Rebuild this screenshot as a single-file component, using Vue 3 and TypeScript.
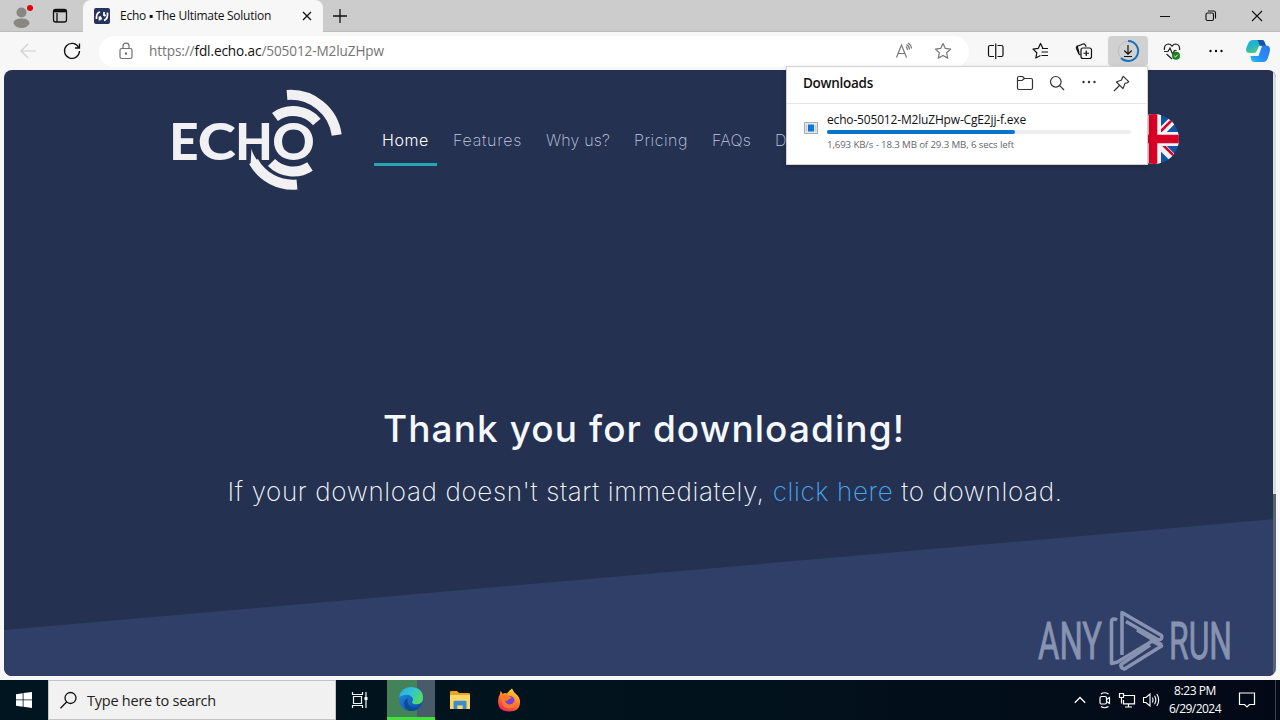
<script setup lang="ts">
import type { Directive } from 'vue'

interface NavItem {
  label: string
  width: number
  active?: boolean
}

const navItems: NavItem[] = [
  { label: 'Home', width: 47, active: true },
  { label: 'Features', width: 69 },
  { label: 'Why us?', width: 64 },
  { label: 'Pricing', width: 54 },
  { label: 'FAQs', width: 39 },
  { label: 'D', width: 12 },
]

const progress = 62

// Tracks a single-line label so that it spans the given width in pixels.
const vFit: Directive<HTMLElement, number> = {
  mounted(el, { value }) {
    const count = (el.textContent ?? '').trim().length
    const range = document.createRange()
    range.selectNodeContents(el)
    const natural = range.getBoundingClientRect().width
    el.style.letterSpacing = `${((value - natural) / Math.max(count, 1)).toFixed(3)}px`
  },
}
</script>

<template>
  <div class="screen">
    <header class="titlebar">
      <div class="profile">
        <svg width="26" height="28" viewBox="0 0 26 28">
          <circle cx="12.500" cy="10.500" r="5" fill="#8a8684" />
          <path d="M4.500 21.500q0-5 8-5t8 5q-2.500 4.500-8 4.500t-8-4.500z" fill="#8a8684" />
          <circle cx="21" cy="6" r="3" fill="#e3000f" />
        </svg>
      </div>
      <div class="workspaces">
        <svg width="16" height="16" viewBox="0 0 16 16" fill="none" stroke="#111" stroke-width="1.300">
          <rect x="1.500" y="1.500" width="13" height="12.500" rx="2.200" />
          <path d="M1.500 3.700h13M5 5v9" />
          <path d="M2 3h12" stroke-width="2.200" />
        </svg>
      </div>
      <div class="tab">
        <svg width="16" height="16" viewBox="0 0 16 16">
          <rect width="16" height="16" rx="2" fill="#29345c" />
          <path d="M2.500 11V8.500Q3 4.500 6 4M5.500 12.500V8.500M10 4v4M13.500 4.500v3Q13 11.500 10 12.500M6 8.500l1.500 3M10 8l1.700-1" stroke="#fff" stroke-width="1.700" fill="none" />
        </svg>
        <span class="tab-title"><span v-fit="151">Echo ▪ The Ultimate Solution</span></span>
        <svg width="10" height="10" viewBox="0 0 10 10" stroke="#111" stroke-width="1.300"><path d="M1 1l8 8M9 1l-8 8" /></svg>
      </div>
      <svg class="new-tab" width="14" height="14" viewBox="0 0 14 14" stroke="#111" stroke-width="1.300"><path d="M7 0v14M0 7h14" /></svg>
      <div class="window-controls">
        <svg width="46" height="32" viewBox="0 0 46 32" stroke="#111"><path d="M18 16.500h10" /></svg>
        <svg width="46" height="32" viewBox="0 0 46 32" fill="none" stroke="#111" stroke-width="1.100">
          <rect x="18" y="13" width="7.500" height="7.500" rx="1.500" /><path d="M20 11h5.500q2 0 2 2v5.500" />
        </svg>
        <svg width="46" height="32" viewBox="0 0 46 32" stroke="#111" stroke-width="1.100"><path d="M18 11l10 10M28 11l-10 10" /></svg>
      </div>
    </header>

    <div class="toolbar">
      <svg class="tool back" viewBox="0 0 44 30" fill="none" stroke="#cfcfcf" stroke-width="1.200"><path d="M30 15H15M22 8l-7 7 7 7" /></svg>
      <svg class="tool" viewBox="0 0 44 30" fill="none" stroke="#111" stroke-width="1.300"><path d="M28.700 11.500a7.500 7.500 0 1 0 .8 3.500M29.500 7.500v4.500h-4.500" /></svg>
      <div class="omnibox">
        <svg width="14" height="18" viewBox="0 0 14 18" fill="none" stroke="#707070" stroke-width="1.200">
          <rect x="1" y="6.500" width="12" height="10" rx="1.700" /><path d="M4 6.500V4q0-2.800 3-2.800T10 4v2.500" /><circle cx="7" cy="11.500" r=".6" fill="#707070" />
        </svg>
        <span class="url"><span v-fit="235">https://<b>fdl.echo.ac</b>/505012-M2luZHpw</span></span>
        <svg width="18" height="18" viewBox="0 0 18 18" fill="none" stroke="#777" stroke-width="1.200">
          <path d="M1.500 15.500L6.500 3l5 12.500M3.200 11.500h6.600M11 4.500q1.500 1.200 1.500 3.500M11.500 2.500q3 1.700 3 5M13 1q3.300 2 3.500 5.500" />
        </svg>
        <svg class="star" width="18" height="18" viewBox="0 0 18 18" fill="none" stroke="#777" stroke-width="1.200">
          <path d="M9 1.500l2.300 4.900 5.300.7-3.900 3.700 1 5.300L9 13.500l-4.700 2.600 1-5.300L1.400 7.100l5.300-.7z" stroke-linejoin="round" />
        </svg>
      </div>
      <div class="actions">
        <svg class="tool" viewBox="0 0 44 30" fill="none" stroke="#111" stroke-width="1.200"><path d="M20 9.500h-4q-1.500 0-1.500 1.500v8q0 1.500 1.500 1.500h4M23.500 9.500h4q1.500 0 1.500 1.500v8q0 1.500-1.500 1.500h-4M21.750 7.500v15.500" /></svg>
        <svg class="tool" viewBox="0 0 44 30" fill="none" stroke="#111" stroke-width="1.200"><path d="M28 12.500h-3l-2.500-5-2.300 4.900-5.200.7 3.800 3.700-1 5.200 4.700-2.500M24 12.500h6M23.500 16h6.500M23.500 19.500h6.500" stroke-linejoin="round" /></svg>
        <svg class="tool" viewBox="0 0 44 30" fill="none" stroke="#111" stroke-width="1.200">
          <path d="M18.500 19l-1.500-1-2.500-5.500q-.6-1.600 1-2.200l5.500-2.300q1.500-.5 2.300 1l.9 1.600M17 17l-2-7.500" /><rect x="19" y="12" width="10.500" height="10.500" rx="2" /><path d="M24.250 14.500v5.500M21.500 17.250h5.500" />
        </svg>
        <div class="download-button">
          <svg class="tool" viewBox="0 0 40 30" fill="none">
            <circle cx="20" cy="15" r="9.700" stroke="#bdbdbd" stroke-width="1" />
            <path d="M20 5a10 10 0 1 1-7 17" stroke="#1873bd" stroke-width="1.900" /><path d="M20 9v9M16.300 14.500l3.700 3.700 3.700-3.700M16 20.500h8" stroke="#111" stroke-width="1.200" />
          </svg>
        </div>
        <svg class="tool" viewBox="0 0 44 30" fill="none" stroke="#222" stroke-width="1.200">
          <path d="M14.500 14q-.7-5.500 3.700-6 2.300 0 3.800 2.200Q23.500 8 25.800 8q4.400.5 3.700 6M14 15.500h4l2-3.500 2.500 6 2-3.500h2M16.500 18l5.500 5" /><circle cx="26" cy="19.800" r="4" fill="#16811e" stroke="none" /><path d="M24.200 19.800l1.300 1.300 2.300-2.500" stroke="#fff" stroke-width=".9" />
        </svg>
        <svg class="tool" viewBox="0 0 44 30" fill="#111"><circle cx="16.500" cy="15" r="1.200" /><circle cx="22" cy="15" r="1.200" /><circle cx="27.500" cy="15" r="1.200" /></svg>
        <svg class="copilot" width="26" height="24" viewBox="0 0 26 24">
          <defs>
            <linearGradient id="cpA" x1="0" y1="0" x2=".6" y2="1"><stop stop-color="#1bb0e0" /><stop offset=".5" stop-color="#22b7c3" /><stop offset="1" stop-color="#62cf6b" /></linearGradient>
            <linearGradient id="cpB" x1="1" y1="0" x2="0" y2="1"><stop stop-color="#2879ee" /><stop offset=".6" stop-color="#2b8df5" /><stop offset="1" stop-color="#1dc4ee" /></linearGradient>
          </defs>
          <path d="M8 1h9q2 0 2.700 2.200L21 7h-4q-2 0-2.800 2.400L12 12q-.7 2-3 2H5q-4 0-4-3.500Q1 9 3 5q1.300-4 5-4z" fill="url(#cpA)" />
          <path d="M12 1h5q2 0 2.700 2.200L21 7h-4q-2.500 0-3.300-3Q13.200 1.500 12 1z" fill="#1853a9" />
          <path d="M17.500 6.500H21q4 0 4 4 0 2.500-2 8-1.400 4.500-5 4.500H9q-2 0-2.700-2L5.500 17H9q2.300 0 3-2.200l2.300-6Q15 6.500 17.500 6.500z" fill="url(#cpB)" />
          <path d="M14 7h3l-3.500 10h-4z" fill="#eefcff" />
        </svg>
      </div>
    </div>

    <main class="viewport">
      <div class="slope"></div>
      <nav class="site-nav">
        <svg class="logo" width="180" height="110" viewBox="165 85 180 110">
          <g fill="none" stroke="#f1f1f3" stroke-width="10">
            <path d="M287 95a46.500 46.500 0 0 1 49.700 40" />
            <path d="M275 117a31 31 0 0 1 41.800 5" />
            <path d="M271.500 162.500a30.500 30.500 0 0 0 38.500 4" />
            <path d="M253.500 161.500a45 45 0 0 0 43.500 23" />
          </g>
          <path d="M251.500 148.500q1 6 8 15l-9 1z" fill="#f1f1f3" />
          <g class="logo-text">
            <text x="169.200" y="160.300">E</text>
            <text x="197.700" y="160.300" textLength="38" lengthAdjust="spacingAndGlyphs">C</text>
            <text x="235.200" y="160.300" textLength="37.500" lengthAdjust="spacingAndGlyphs">H</text>
            <text x="272.300" y="160.300" textLength="42.500" lengthAdjust="spacingAndGlyphs">O</text>
          </g>
        </svg>
        <ul class="links">
          <li v-for="item in navItems" :key="item.label" :class="{ active: item.active }"><span v-fit="item.width">{{ item.label }}</span></li>
        </ul>
        <svg class="flag" width="50" height="50" viewBox="0 0 50 50">
          <defs><clipPath id="round"><circle cx="25" cy="25" r="25" /></clipPath></defs>
          <g clip-path="url(#round)">
            <rect width="50" height="50" fill="#0f55a5" />
            <path d="M0 0l50 50M50 0L0 50" stroke="#f2f2f5" stroke-width="8" />
            <path d="M24 25L49 0M28 25l23 23M25 25L0 0M23 25L0 48" stroke="#d80027" stroke-width="2.500" />
            <path d="M25 0v50M0 25h50" stroke="#f2f2f5" stroke-width="14" />
            <path d="M24 0v50M0 25h50" stroke="#d80027" stroke-width="8.500" />
          </g>
        </svg>
      </nav>
      <section class="hero">
        <h1><span v-fit="522">Thank you for downloading!</span></h1>
        <p><span v-fit="835">If your download doesn't start immediately, <a>click here</a> to download.</span></p>
      </section>
      <div class="scrollbar"><div class="thumb"></div></div>
      <svg class="watermark" width="204" height="70" viewBox="1035 605 204 70">
        <g class="mark-text">
          <text x="1038" y="659.300" textLength="64" lengthAdjust="spacingAndGlyphs">ANY</text>
          <text x="1169" y="659.300" textLength="63" lengthAdjust="spacingAndGlyphs">RUN</text>
        </g>
        <g fill="none" stroke="#8793b1" stroke-width="3.600" stroke-linejoin="round">
          <path d="M1117 620q-5.500-3-5.500 2.500v41l6-1.500 34-20.500" />
          <path d="M1122 655v-42.500l39.500 23q1.500 4-3 4.500L1126 621.500" />
          <path d="M1150 640l11.500 6-37 23q-4-.5-3.500-4.500l29-19.500M1137 630l25 15" />
        </g>
      </svg>
    </main>

    <footer class="taskbar">
      <div class="start"><svg width="16" height="16" viewBox="0 0 16 16" fill="#fff"><path d="M0 2.200l6.700-1v6.300H0zM7.500 1.100L16 0v7.500H7.500zM0 8.300h6.700v6.500l-6.700-1zM7.500 8.300H16V16l-8.500-1.200z" /></svg></div>
      <div class="search">
        <svg width="18" height="18" viewBox="0 0 18 18" fill="none" stroke="#111" stroke-width="1.300"><circle cx="10.500" cy="7" r="5.500" /><path d="M6.800 10.800L.5 17.200" /></svg>
        <span v-fit="129">Type here to search</span>
      </div>
      <div class="task">
        <svg width="18" height="18" viewBox="0 0 18 18" fill="none" stroke="#eef3f5" stroke-width="1.200"><path d="M1.500 1v2.500h10V1M1.500 17v-2.500h10V17M2.500 5.500h8v7h-8zM15 1v16" /><path d="M13.500 6h3v3h-3z" fill="#fff" stroke="none" /></svg>
      </div>
      <div class="task edge">
        <svg width="26" height="26" viewBox="0 0 26 26">
          <defs>
            <linearGradient id="edTop" x1="0" y1="0" x2="1" y2=".5"><stop stop-color="#2ba9e8" /><stop offset=".55" stop-color="#2fc5d0" /><stop offset="1" stop-color="#56d86a" /></linearGradient>
            <linearGradient id="edBody" x1="0" y1="0" x2=".7" y2="1"><stop stop-color="#2294e2" /><stop offset="1" stop-color="#0d51ad" /></linearGradient>
          </defs>
          <circle cx="13" cy="13" r="12" fill="url(#edBody)" />
          <path d="M1.200 11Q3 1 13.500 1 25 2 25 12q0 6-6.200 6.200-5 0-4.800-2.300 2-2.300 0-5Q10 6.500 1.200 11z" fill="url(#edTop)" />
          <path d="M10 12.500q-2 6 3.500 8.500 4.500 2 9-1.500-4.500 7-12 5-6-4-4-9.500 1-2.500 3.500-2.500z" fill="#0f4a97" />
        </svg>
      </div>
      <div class="task">
        <svg width="22" height="20" viewBox="0 0 22 20"><path d="M1 2q0-1 1-1h6l2 2h10q1 0 1 1v14H1z" fill="#e7a41d" /><path d="M1 5h20v14H1z" fill="#ffd766" /><path d="M4.500 19v-7q0-1.200 1.200-1.200h10.600q1.200 0 1.200 1.200v7h-3.800v-3.500H8.300V19z" fill="#3b8ecb" /></svg>
      </div>
      <div class="task">
        <svg width="24" height="24" viewBox="0 0 24 24">
          <defs><linearGradient id="fx" x1=".8" y1="0" x2=".3" y2="1"><stop stop-color="#ffe242" /><stop offset=".45" stop-color="#ff8a22" /><stop offset="1" stop-color="#f3225c" /></linearGradient></defs>
          <path d="M15 .5q1.500 3.500 4 5.500 4 3 4 8 0 9.500-11 9.500T1 13q0-4 2-7l.5-3Q5 4 5.500 6 8 4.500 10 5.500 12 2.500 15 .5z" fill="url(#fx)" />
          <circle cx="12.300" cy="13" r="5.300" fill="#7a3fd4" /><path d="M5.500 7.500q3-2 6 .5 2.500.5 3 2-3 .5-3.500 2.500-1 .5-3 0 1 4 5 4 3.500-.5 4.300-4 2 7-4.300 8-7 0-8.300-6.500z" fill="#ff7a28" />
        </svg>
      </div>
      <div class="tray">
        <svg width="12" height="18" viewBox="0 0 12 18" fill="none" stroke="#fff" stroke-width="1.300"><path d="M.8 11.700L6 6.500l5.200 5.200" /></svg>
        <svg width="14" height="18" viewBox="0 0 14 18" fill="none" stroke="#fff" stroke-width="1.200"><rect x="2" y="5.500" width="6.500" height="7.500" rx="1.500" /><path d="M8.500 8.500l3-2v6l-3-2M3 3q3.500-2.500 7.500 0M3 15.500q3.500 2.500 7.500 0" /></svg>
        <svg width="18" height="18" viewBox="0 0 18 18" fill="none" stroke="#fff" stroke-width="1.200"><path d="M6 4.500h10.500v8.300H5.500V9M10.500 12.800V16M7 16h7M1.500 2.500h4v4h-4zM3.500 6.500v6" /></svg>
        <svg width="18" height="18" viewBox="0 0 18 18" fill="none" stroke="#fff" stroke-width="1.100"><path d="M1.500 6.500h2.500l4-3.500v12l-4-3.500H1.500zM10.300 6.500q1.500 2.500 0 5M12.500 4.700q2.700 4.300 0 8.600M14.800 3q3.800 6 0 12" /></svg>
        <div class="clock"><span v-fit="42">8:23 PM</span><span v-fit="52">6/29/2024</span></div>
        <svg class="notify" width="18" height="18" viewBox="0 0 18 18" fill="none" stroke="#fff" stroke-width="1.200"><path d="M1.500 2h15v11.500h-5L9 16l-2.500-2.500h-5z" /></svg>
        <i class="peek"></i>
      </div>
    </footer>

    <aside class="downloads">
      <div class="downloads-head">
        <strong><span v-fit="70">Downloads</span></strong>
        <svg width="18" height="16" viewBox="0 0 18 16" fill="none" stroke="#333" stroke-width="1.200"><path d="M1.500 3q0-1.500 1.500-1.500h3.500L8.500 3.500h6.500q1.500 0 1.500 1.500v8q0 1.500-1.500 1.500H3q-1.500 0-1.500-1.500zM1.500 5.500H6l2.500-2" /></svg>
        <svg width="16" height="16" viewBox="0 0 16 16" fill="none" stroke="#333" stroke-width="1.200"><circle cx="6.800" cy="6.800" r="5.300" /><path d="M10.700 10.700l4.300 4.300" /></svg>
        <svg width="16" height="16" viewBox="0 0 16 16" fill="#333"><circle cx="2.500" cy="7" r="1.200" /><circle cx="8" cy="7" r="1.200" /><circle cx="13.500" cy="7" r="1.200" /></svg>
        <svg width="17" height="17" viewBox="0 0 17 17" fill="none" stroke="#333" stroke-width="1.200"><path d="M10.300 1.300l5.400 5.400-1.400 1-2.300.7-2 5.200L3.400 7l5.200-2L9.300 2.700zM6.500 10.500L1 16" stroke-linejoin="round" /></svg>
      </div>
      <div class="download-item">
        <svg width="14" height="12" viewBox="0 0 14 12"><path d="M.5.500h13v11H.5z" fill="#e4e8ea" stroke="#aaa" /><path d="M4 2.500h6v7H4z" fill="#0a78d2" /><path d="M2.500 3v6.500M11.700 3v6.500" stroke="#b9c7d2" /></svg>
        <div class="download-info">
          <div class="file"><span v-fit="199">echo-505012-M2luZHpw-CgE2jj-f.exe</span></div>
          <div class="track"><div class="bar" :style="{ width: progress + '%' }"></div></div>
          <div class="status"><span v-fit="187">1,693 KB/s - 18.3 MB of 29.3 MB, 6 secs left</span></div>
        </div>
      </div>
    </aside>
  </div>
</template>

<style>
body {
  margin: 0;
  overflow: hidden;
}
</style>

<style scoped>
* { box-sizing: border-box; }
.screen {
  position: relative;
  width: 1280px;
  height: 720px;
  display: flex;
  flex-direction: column;
  background: #f7f7f8;
  font-family: "Open Sans", "Noto Sans", sans-serif;
  color: #111;
  white-space: nowrap;
  overflow: hidden;
}
svg { display: block; flex: none; }

.titlebar { height: 32px; flex: none; display: flex; align-items: center; background: #ccc; border-bottom: 1px solid #bcbcbc; }
.profile { width: 42px; padding-left: 9px; }
.workspaces { width: 41px; padding-left: 10px; }
.tab { display: flex; align-items: center; width: 240px; height: 32px; padding: 0 11px; margin-bottom: -1px; background: #f7f7f7; border-radius: 8px 8px 0 0; }
.tab-title { flex: 1; padding-left: 10px; font-size: 12px; line-height: 16px; }
.new-tab { margin-left: 10px; }
.window-controls { margin-left: auto; display: flex; }

.toolbar { height: 38px; flex: none; display: flex; align-items: center; background: #f7f7f7; }
.tool { width: 44px; height: 30px; }
.back { margin-left: 6px; }
.omnibox { width: 870px; height: 31px; margin-left: 5px; padding: 0 17px 0 20px; display: flex; align-items: center; border-radius: 16px; background: #fff; }
.url { flex: 1; padding-left: 16px; font-size: 13.600px; line-height: 20px; color: #747474; }
.url b { font-weight: 400; color: #111; }
.star { margin-left: 21px; }
.actions { display: flex; align-items: center; margin-left: 5px; }
.download-button { width: 40px; height: 30px; margin: 0 2px; background: #d1d1d1; border-radius: 4px; }
.download-button .tool { width: 40px; }
.copilot { margin-left: 7px; }

.viewport { position: relative; width: 1272px; height: 606px; flex: none; margin-left: 4px; background: #243150; border-radius: 8px; overflow: hidden; font-family: Inter, "Open Sans", sans-serif; }
.slope { position: absolute; inset: 449px 0 0 0; background: #2f3f67; clip-path: polygon(0 111px, 100% 0, 100% 100%, 0 100%); }
.site-nav { position: relative; display: flex; align-items: center; height: 140px; padding-left: 161px; }
.logo { margin: 0 29px 0 0; }
.logo-text { font: 900 51px Lato, sans-serif; fill: #f1f1f3; }
.links { display: flex; gap: 8px; margin: 0; padding: 0; list-style: none; }
.links li { height: 52px; padding: 0 8px; line-height: 53px; font-size: 16px; font-weight: 200; color: #c0cae0; border-bottom: 3px solid transparent; }
.links .active { color: #fff; border-color: #22a6b0; font-weight: 300; }
.flag { margin: -2px 97px 0 auto; }
.hero { position: relative; padding-top: 193px; text-align: center; color: #f6f8ff; }
.hero h1 { margin: 0 0 0 8px; padding-top: 1px; font-size: 37px; font-weight: 500; line-height: 50px; }
.hero p { margin: 18px 0 0 10px; font-size: 26px; font-weight: 200; line-height: 40px; }
.hero a { color: #48a8f2; }
.scrollbar { position: absolute; top: 0; right: 0; width: 3px; height: 100%; background: #dddedf; display: flex; align-items: flex-end; }
.thumb { width: 3px; height: 182px; background: #566471; }
.watermark { position: absolute; left: 1031px; top: 535px; }
.mark-text { font: 400 51.500px Roboto, sans-serif; fill: #8793b1; stroke: #8793b1; stroke-width: .9; }

.taskbar { display: flex; align-items: center; height: 40px; flex: none; margin-top: 4px; background: linear-gradient(90deg, #00151f, #02121d 60%, #030816); color: #fff; }
.start { width: 48px; display: flex; justify-content: center; }
.search { width: 288px; height: 40px; display: flex; align-items: center; gap: 9px; padding-left: 11px; background: #f1f1f1; border: 1px solid #c4c4c4; color: #222; font-size: 14.500px; }
.task { display: flex; align-items: center; justify-content: center; width: 49px; height: 40px; }
.search + .task { width: 51px; padding-right: 4px; }
.edge { width: 48px; background: linear-gradient(90deg, #44835a 62%, #475b69 62%); border-bottom: 3px solid #45df3b; }
.tray { margin-left: auto; display: flex; align-items: center; height: 40px; padding-right: 4px; gap: 6px; }
.tray svg:first-child { margin-right: 6px; }
.clock { width: 60px; margin-left: -1px; display: flex; flex-direction: column; align-items: center; font-size: 12px; line-height: 18px; }
.notify { margin-left: 7px; }
.peek { width: 1px; height: 40px; margin-left: 13px; background: #3d4450; }

.downloads { position: absolute; left: 786px; top: 66px; width: 362px; height: 99px; background: #fff; border: 1px solid #d2d2d2; box-shadow: 0 2px 5px #0003; }
.downloads-head { display: flex; align-items: center; height: 37px; padding: 0 17px 4px 16px; gap: 16px; border-bottom: 1px solid #e6e6e6; }
.downloads-head strong { flex: 1; font-size: 13.500px; font-weight: 600; }
.downloads-head strong + svg { margin-right: -1px; }
.download-item { display: flex; padding: 6px 16px 0 17px; gap: 9px; }
.download-item > svg { margin-top: 12px; }
.download-info { flex: 1; }
.file { height: 20px; line-height: 20px; font-size: 12px; }
.track { height: 4px; border-radius: 2px; background: #ededed; }
.bar { height: 4px; border-radius: 2px; background: #0874cc; }
.status { margin-top: 3px; line-height: 16px; font-size: 9.700px; color: #666; }
</style>
